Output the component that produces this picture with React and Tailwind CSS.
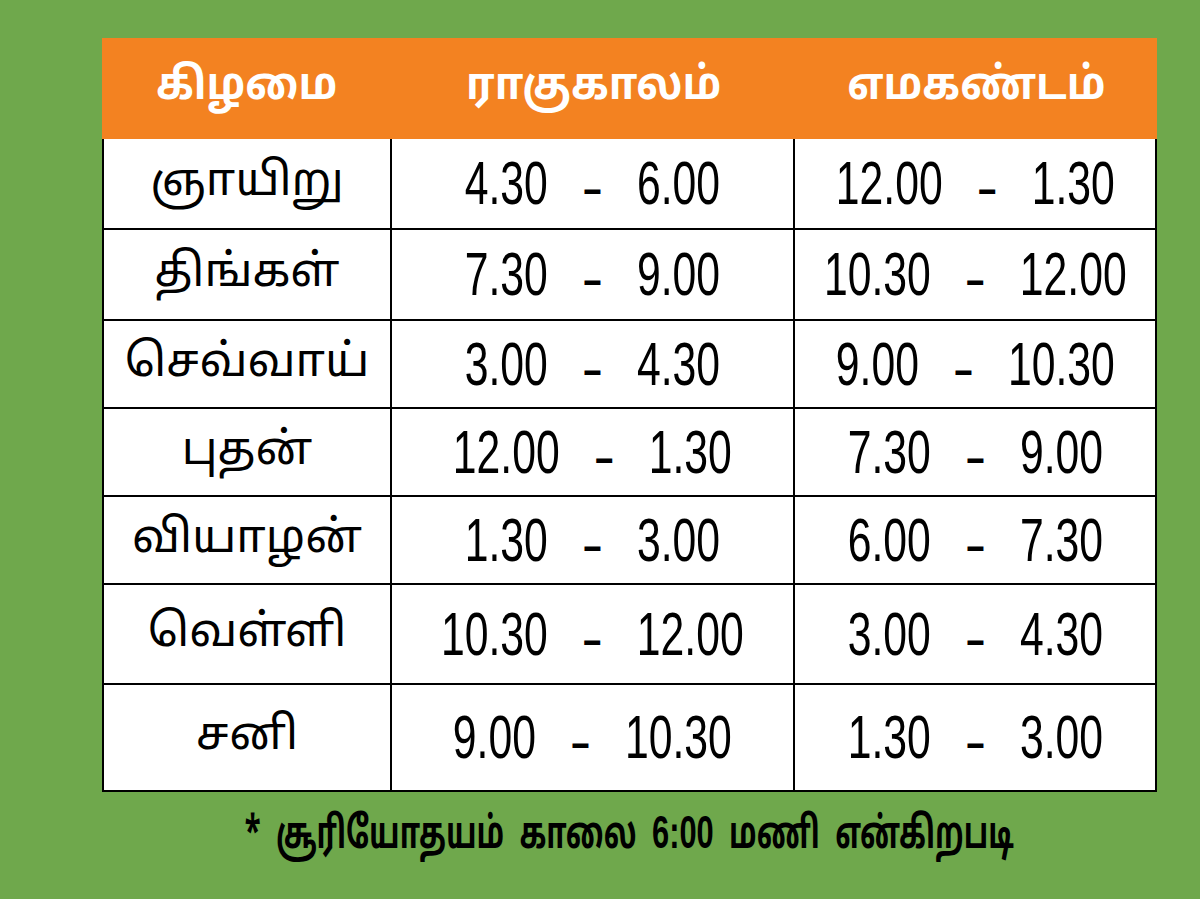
const ROWS = [
  { day: 'ஞாயிறு', rahu: ['4.30', '6.00'], ema: ['12.00', '1.30'], h: 'h-[89px]' },
  { day: 'திங்கள்', rahu: ['7.30', '9.00'], ema: ['10.30', '12.00'], h: 'h-[91px]' },
  { day: 'செவ்வாய்', rahu: ['3.00', '4.30'], ema: ['9.00', '10.30'], h: 'h-[88px]' },
  { day: 'புதன்', rahu: ['12.00', '1.30'], ema: ['7.30', '9.00'], h: 'h-[88px]' },
  { day: 'வியாழன்', rahu: ['1.30', '3.00'], ema: ['6.00', '7.30'], h: 'h-[88px]' },
  { day: 'வெள்ளி', rahu: ['10.30', '12.00'], ema: ['3.00', '4.30'], h: 'h-[100px]' },
  { day: 'சனி', rahu: ['9.00', '10.30'], ema: ['1.30', '3.00'], h: 'h-[107px]' },
]

const tamil = "font-['Noto_Sans_Tamil','Latha','Lohit_Tamil','Noto_Sans',sans-serif]"
const nums = "font-['Liberation_Sans_Narrow','Liberation_Sans',sans-serif]"

// condensed look: scale the whole run horizontally, it stays centred in its cell
function Range({ v }) {
  return (
    <span className={`${nums} inline-block scale-x-[0.7] whitespace-pre text-[61px] leading-none text-black`}>
      {v[0]}{'   '}
      <span className="text-[46px] font-bold">–</span>
      {'   '}{v[1]}
    </span>
  )
}

export default function App() {
  return (
    <div className="h-[899px] w-[1200px] bg-[#6fa84c] pt-[38px]">
      <div className="ml-[102px] w-[1055px]">
        <div className="grid h-[101px] grid-cols-[290px_403px_minmax(0,1fr)] bg-[#f38221] text-white">
          {['கிழமை', 'ராகுகாலம்', 'எமகண்டம்'].map((t) => (
            <div key={t} className="flex min-w-0 items-center justify-center">
              <span className={`${tamil} inline-block scale-x-[0.92] whitespace-nowrap text-[45px] font-bold`}>
                {t}
              </span>
            </div>
          ))}
        </div>
        <div className="border-2 border-t-0 border-black bg-white">
          {ROWS.map((r, i) => (
            <div
              key={r.day}
              className={`grid grid-cols-[288px_403px_minmax(0,1fr)] ${r.h} ${i > 0 ? 'border-t-2 border-black' : ''}`}
            >
              <div className="flex min-w-0 items-center justify-center border-r-2 border-black">
                <span className={`${tamil} whitespace-nowrap text-[46px] text-black`}>{r.day}</span>
              </div>
              <div className="flex min-w-0 items-center justify-center border-r-2 border-black">
                <Range v={r.rahu} />
              </div>
              <div className="flex min-w-0 items-center justify-center">
                <Range v={r.ema} />
              </div>
            </div>
          ))}
        </div>
      </div>
      <div className="ml-[102px] flex w-[1055px] justify-center pt-[6px]">
        <span className={`${tamil} inline-block scale-x-[0.67] whitespace-pre text-[44px] font-bold text-black`}>
          {'*  சூரியோதயம்  காலை  '}
          <span className={`${nums} text-[46px]`}>6:00</span>
          {'  மணி  என்கிறபடி'}
        </span>
      </div>
    </div>
  )
}
